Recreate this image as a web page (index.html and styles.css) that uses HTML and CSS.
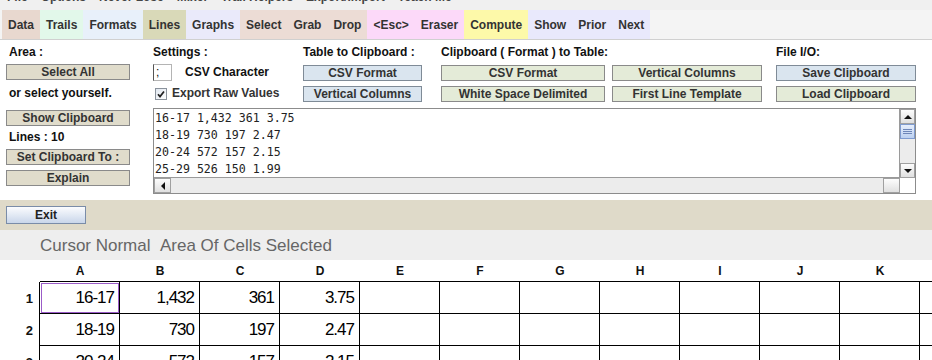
FILE: index.html
```html
<!DOCTYPE html>
<html lang="en">
  <head>
    <meta charset="UTF-8" />
    <meta name="viewport" content="width=device-width, initial-scale=1.0" />
    <title>Clipboard</title>
    <link rel="stylesheet" href="styles.css">
  </head>
  <body>
    <div class="menubar">
      <div class="menu-items">
        <span>File</span>
        <span>Options</span>
        <span>Never Lose</span>
        <span>Mixer</span>
        <span>Trail Helpers</span>
        <span>Export/Import</span>
        <span>Teach Me</span>
      </div>
    </div>

    <div class="tabs">
      <div class="tab t-data">Data</div>
      <div class="tab t-trails">Trails</div>
      <div class="tab t-formats">Formats</div>
      <div class="tab t-lines">Lines</div>
      <div class="tab t-graphs">Graphs</div>
      <div class="tab t-select">Select</div>
      <div class="tab t-select">Grab</div>
      <div class="tab t-select">Drop</div>
      <div class="tab t-esc">&lt;Esc&gt;</div>
      <div class="tab t-esc">Eraser</div>
      <div class="tab t-compute">Compute</div>
      <div class="tab t-show">Show</div>
      <div class="tab t-show">Prior</div>
      <div class="tab t-show">Next</div>
    </div>

    <div class="panel">
      <div class="area">
        <div class="label">Area :</div>
        <div class="btn tan select-all">Select All</div>
        <div class="label yourself">or select yourself.</div>
        <div class="btn tan show-clip">Show Clipboard</div>
        <div class="label lines">Lines : 10</div>
        <div class="btn tan set-clip">Set Clipboard To :</div>
        <div class="btn tan explain">Explain</div>
      </div>

      <div class="right">
        <div class="top-row">
          <div class="settings">
            <div class="label">Settings :</div>
            <div class="field-row">
              <span class="field">;</span>
              <span class="label">CSV Character</span>
            </div>
            <div class="check-row">
              <svg class="check" width="12" height="12" viewBox="0 0 12 12">
                <defs>
                  <linearGradient id="cb" x1="0" y1="0" x2="1" y2="1">
                    <stop offset="0" stop-color="#dfe6ef" />
                    <stop offset="1" stop-color="#ffffff" />
                  </linearGradient>
                </defs>
                <rect x="0.5" y="0.5" width="11" height="11" fill="url(#cb)" stroke="#8a929c" />
                <path d="M3 6.2 L5 8.6 L9 3.4" fill="none" stroke="#222" stroke-width="1.7" />
              </svg>
              <span class="check-label">Export Raw Values</span>
            </div>
          </div>

          <div class="to-clip">
            <div class="label">Table to Clipboard :</div>
            <div class="btn blue">CSV Format</div>
            <div class="btn blue">Vertical Columns</div>
          </div>

          <div class="to-table">
            <div class="label">Clipboard ( Format ) to Table:</div>
            <div class="btn-grid">
              <div class="btn green">CSV Format</div>
              <div class="btn green">Vertical Columns</div>
              <div class="btn green">White Space Delimited</div>
              <div class="btn green">First Line Template</div>
            </div>
          </div>

          <div class="file-io">
            <div class="label">File I/O:</div>
            <div class="btn blue">Save Clipboard</div>
            <div class="btn green">Load Clipboard</div>
          </div>
        </div>

        <div class="scrollpane">
          <div class="clip-text">16-17 1,432 361 3.75
18-19 730 197 2.47
20-24 572 157 2.15
25-29 526 150 1.99</div>
          <div class="vbar">
            <div class="sb-btn"><span class="tri up"></span></div>
            <div class="thumb">
              <svg width="9" height="6" viewBox="0 0 9 6">
                <path d="M0 0.5 H9 M0 2.5 H9 M0 4.5 H9" stroke="#6e86b8" stroke-width="1" />
              </svg>
            </div>
            <div class="track"></div>
            <div class="sb-btn"><span class="tri down"></span></div>
          </div>
          <div class="hbar">
            <div class="sb-btn h"><span class="tri left"></span></div>
            <div class="track"></div>
            <div class="sb-btn h"><span class="tri right"></span></div>
          </div>
          <div class="corner"></div>
        </div>
      </div>
    </div>

    <div class="footer">
      <div class="exit">Exit</div>
    </div>

    <div class="status">Cursor Normal&nbsp;&nbsp;Area Of Cells Selected</div>

    <div class="sheet">
      <div class="corner-cell"></div>
      <div class="colhead">A</div>
      <div class="colhead">B</div>
      <div class="colhead">C</div>
      <div class="colhead">D</div>
      <div class="colhead">E</div>
      <div class="colhead">F</div>
      <div class="colhead">G</div>
      <div class="colhead">H</div>
      <div class="colhead">I</div>
      <div class="colhead">J</div>
      <div class="colhead">K</div>
      <div class="colhead">L</div>

      <div class="rowhead">1</div>
      <div class="cell sel">16-17</div>
      <div class="cell">1,432</div>
      <div class="cell">361</div>
      <div class="cell">3.75</div>
      <div class="cell"></div>
      <div class="cell"></div>
      <div class="cell"></div>
      <div class="cell"></div>
      <div class="cell"></div>
      <div class="cell"></div>
      <div class="cell"></div>
      <div class="cell"></div>

      <div class="rowhead">2</div>
      <div class="cell">18-19</div>
      <div class="cell">730</div>
      <div class="cell">197</div>
      <div class="cell">2.47</div>
      <div class="cell"></div>
      <div class="cell"></div>
      <div class="cell"></div>
      <div class="cell"></div>
      <div class="cell"></div>
      <div class="cell"></div>
      <div class="cell"></div>
      <div class="cell"></div>

      <div class="rowhead">3</div>
      <div class="cell">20-24</div>
      <div class="cell">572</div>
      <div class="cell">157</div>
      <div class="cell">2.15</div>
      <div class="cell"></div>
      <div class="cell"></div>
      <div class="cell"></div>
      <div class="cell"></div>
      <div class="cell"></div>
      <div class="cell"></div>
      <div class="cell"></div>
      <div class="cell"></div>
    </div>
  </body>
</html>
```

FILE: styles.css
```css
* {
  box-sizing: border-box;
}
body {
  margin: 0;
  width: 932px;
  height: 360px;
  overflow: hidden;
  background: #fff;
  color: #111;
  font-family: "Liberation Sans", Arial, sans-serif;
  font-size: 12px;
}

/* menu bar, only the bottom of it is on screen */
.menubar {
  height: 10px;
  background: #f0f0f0;
  overflow: hidden;
}
.menu-items {
  display: flex;
  gap: 13px;
  margin-top: -10px;
  padding-left: 7px;
  line-height: 14px;
  font-weight: bold;
  color: #444;
}

/* tabs */
.tabs {
  display: flex;
  height: 30px;
  padding-left: 2px;
  background: #f4f4f4;
  border-bottom: 1px solid #d0d0d0;
}
.tab {
  display: flex;
  align-items: center;
  padding: 0 6px;
  font-weight: bold;
  color: #333;
}
.t-data { background: #e8d8cf; }
.t-trails { background: #e2f8ea; }
.t-formats { background: #e8f0fa; }
.t-lines { background: #d9d9b8; }
.t-graphs { background: #eaeafa; }
.t-select { background: #ecdcd5; }
.t-esc { background: #fcd9f9; }
.t-compute { background: #fdf9a9; }
.t-show { background: #e9e9fc; }

/* control panel */
.panel {
  display: flex;
  height: 160px;
  padding: 4px 0 0 6px;
}
.label {
  height: 17px;
  line-height: 17px;
  font-weight: bold;
  white-space: nowrap;
}
.btn {
  height: 16px;
  display: flex;
  align-items: center;
  justify-content: center;
  border: 1px solid #8a8a8a;
  font-weight: bold;
  color: #333;
  white-space: nowrap;
}
.tan { background: #e0dccb; }
.blue { background: #dae5ef; border-color: #7f8b97; }
.green { background: #e4ebd8; }

.area {
  width: 124px;
  display: flex;
  flex-direction: column;
}
.area .label {
  padding-left: 3px;
}
.select-all { margin-top: 3px; }
.yourself { margin-top: 5px; }
.show-clip { margin-top: 8px; }
.lines { margin-top: 3px; }
.set-clip { margin-top: 3px; }
.explain { margin-top: 5px; }

.right {
  width: 763px;
  margin-left: 23px;
}
.top-row {
  display: flex;
  height: 64px;
}
.top-row .btn {
  margin-top: 4px;
}
.top-row .btn + .btn {
  margin-top: 5px;
}

.settings {
  width: 150px;
}
.field-row {
  display: flex;
  align-items: center;
  margin-top: 3px;
}
.field {
  width: 19px;
  height: 17px;
  padding-left: 2px;
  line-height: 15px;
  border: 1px solid #b4b4b4;
  border-left-color: #555;
  background: #fff;
}
.field-row .label {
  margin-left: 13px;
}
.check-row {
  display: flex;
  align-items: center;
  margin-top: 6px;
  padding-left: 2px;
}
.check-label {
  margin-left: 5px;
  font-weight: bold;
  color: #333;
  line-height: 13px;
}

.to-clip {
  width: 119px;
  margin-right: 19px;
}
.to-table {
  width: 321px;
}
.btn-grid {
  display: grid;
  grid-template-columns: 164px 150px;
  column-gap: 7px;
  row-gap: 5px;
  margin-top: 4px;
}
.btn-grid .btn,
.btn-grid .btn + .btn {
  margin-top: 0;
}
.file-io {
  width: 140px;
  margin-left: 14px;
}

/* clipboard text with scroll bars */
.scrollpane {
  display: grid;
  grid-template-columns: 1fr 15px;
  grid-template-rows: 1fr 15px;
  height: 86px;
  border: 1px solid #8c8c8c;
}
.clip-text {
  padding: 1px 0 0 1px;
  font-family: "DejaVu Sans Mono", "Liberation Mono", monospace;
  font-size: 11.6px;
  line-height: 17px;
  color: #222;
  white-space: pre;
  overflow: hidden;
  border-right: 1px solid #9a9a9a;
  border-bottom: 1px solid #9a9a9a;
}
.vbar {
  display: flex;
  flex-direction: column;
  background: #ececec;
}
.hbar {
  display: flex;
  background: #ececec;
}
.track {
  flex: 1;
}
.sb-btn {
  height: 15px;
  display: flex;
  align-items: center;
  justify-content: center;
  background: linear-gradient(#fdfdfd, #e0e0e0);
  border: 1px solid #a0a0a0;
}
.sb-btn.h {
  width: 17px;
  height: 15px;
}
.thumb {
  height: 15px;
  display: flex;
  align-items: center;
  justify-content: center;
  background: linear-gradient(#e6eefc, #bcd0f0);
  border: 1px solid #7f9bcf;
}
.tri {
  width: 0;
  height: 0;
  border: 4px solid transparent;
}
.tri.up { border-bottom-color: #111; border-top-width: 0; }
.tri.down { border-top-color: #111; border-bottom-width: 0; }
.tri.left { border-right-color: #111; border-left-width: 0; }
.tri.right { border-left-color: #111; border-right-width: 0; }
.corner {
  background: #fff;
}

/* exit bar and status line */
.footer {
  height: 30px;
  padding: 6px 0 0 6px;
  background: #dfdac9;
}
.exit {
  width: 80px;
  height: 18px;
  display: flex;
  align-items: center;
  justify-content: center;
  background: linear-gradient(#fbfcfe, #c9d6ea);
  border: 1px solid #7a8ca8;
  font-weight: bold;
  color: #222;
}
.status {
  height: 30px;
  line-height: 31px;
  padding-left: 40px;
  background: #eeeeee;
  color: #666;
  font-size: 17px;
}

/* spreadsheet */
.sheet {
  display: grid;
  grid-template-columns: 40px repeat(12, 80px);
  grid-template-rows: 22px repeat(3, 32px);
}
.colhead {
  display: flex;
  align-items: center;
  justify-content: center;
  border-bottom: 1px solid #000;
  font-weight: bold;
}
.rowhead {
  display: flex;
  align-items: center;
  justify-content: flex-end;
  padding-right: 6px;
  border-right: 1px solid #000;
  font-weight: bold;
  font-size: 13px;
}
.cell {
  display: flex;
  align-items: center;
  justify-content: flex-end;
  padding-right: 5px;
  border-right: 1px solid #000;
  border-bottom: 1px solid #000;
  font-size: 17px;
  letter-spacing: -1px;
  color: #000;
}
.sel {
  outline: 1px solid #9b5cc8;
  outline-offset: -2px;
}
```
